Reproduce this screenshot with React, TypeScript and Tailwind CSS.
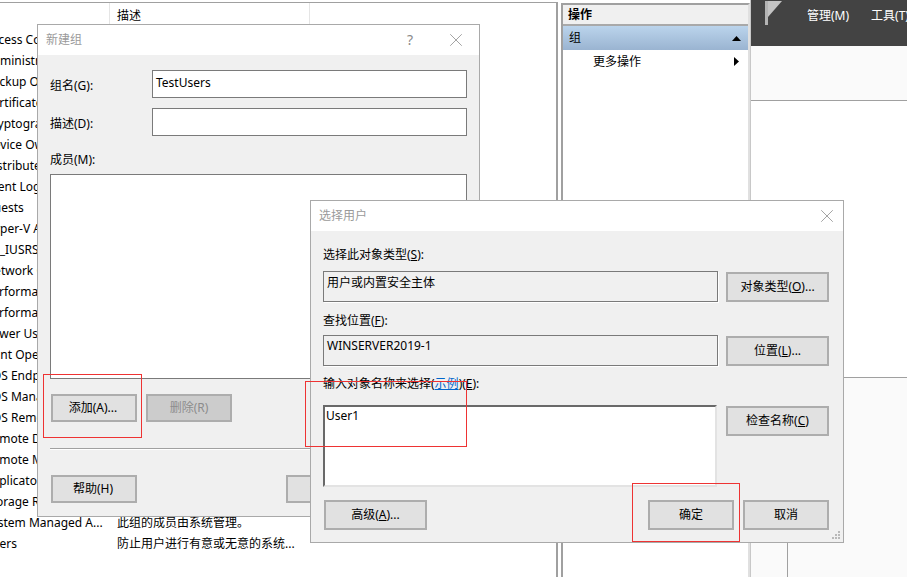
import React from 'react';
import { X } from 'lucide-react';

const FONT = '[font-family:"Noto_Sans","Noto_Sans_CJK_SC",sans-serif]';

const groups: [string, string][] = [
  ['Access Control Assistance', ''],
  ['Administrators', ''],
  ['Backup Operators', ''],
  ['Certificate Service', ''],
  ['Cryptographic Operators', ''],
  ['Device Owners', ''],
  ['Distributed COM Users', ''],
  ['Event Log Readers', ''],
  ['Guests', ''],
  ['Hyper-V Administrators', ''],
  ['IIS_IUSRS', ''],
  ['Network Configuration', ''],
  ['Performance Log Users', ''],
  ['Performance Monitor', ''],
  ['Power Users', ''],
  ['Print Operators', ''],
  ['RDS Endpoint Servers', ''],
  ['RDS Management Servers', ''],
  ['RDS Remote Access', ''],
  ['Remote Desktop Users', ''],
  ['Remote Management', ''],
  ['Replicator', ''],
  ['Storage Replica', ''],
  ['System Managed A...', '此组的成员由系统管理。'],
  ['Users', '防止用户进行有意或无意的系统...'],
];

const Btn: React.FC<{ className?: string; disabled?: boolean; children: React.ReactNode }> = ({ className = '', disabled, children }) => (
  <div
    className={`flex shrink-0 items-center justify-center border-2 border-[#adadad] ${disabled ? 'bg-[#cccccc] text-[#8c8c8c]' : 'bg-[#e1e1e1] text-black'} ${className}`}
  >
    {children}
  </div>
);

const GroupList = () => (
  <div className="flex h-full w-[558px] shrink-0 flex-col pt-[2px]">
    <div className="flex h-full flex-col border-t border-r-2 border-[#a0a0a0]">
      <div className="flex h-[26px] shrink-0">
        <div className="w-[110px] border-r border-[#e5e5e5]" />
        <div className="flex w-[200px] items-center border-r border-[#e5e5e5] pl-[7px]">描述</div>
      </div>
      {groups.map(([name, desc]) => (
        <div key={name} className="flex h-[21px] shrink-0 items-center">
          <div className="ml-[-15px] w-[125px] shrink-0 overflow-hidden whitespace-nowrap">{name}</div>
          <div className="pl-[7px] whitespace-nowrap">{desc}</div>
        </div>
      ))}
    </div>
  </div>
);

const ActionsPanel = () => (
  <div className="ml-[3px] flex h-full w-[189px] shrink-0 flex-col pt-[3px]">
    <div className="flex h-full flex-col border-x-2 border-t-2 border-x-[#a0a0a0] border-t-[#a0a0a0] border-r-[#e0e0e0]">
      <div className="flex h-[21px] shrink-0 items-center border-b-2 border-[#a9a9a9] bg-[#f0f0f0] pl-[5px] font-bold">操作</div>
      <div className="flex h-[24px] shrink-0 items-center justify-between bg-gradient-to-b from-[#bbd4ec] to-[#9ab4d1] pl-[6px] pr-[7px]">
        <span>组</span>
        <svg width="9" height="5" viewBox="0 0 9 5"><path d="M4.5 0 9 5H0z" fill="#000" /></svg>
      </div>
      <div className="flex h-[23px] shrink-0 items-center justify-between pl-[30px] pr-[9px]">
        <span>更多操作</span>
        <svg width="5" height="9" viewBox="0 0 5 9"><path d="M0 0 5 4.5 0 9z" fill="#000" /></svg>
      </div>
    </div>
  </div>
);

const ServerManager = () => (
  <div className="flex h-full flex-1 flex-col overflow-hidden border-l border-[#c8c8c8]">
    <div className="flex h-[46px] shrink-0 items-start bg-[#434343] pt-[1px] text-white">
      <svg width="18" height="25" viewBox="0 0 18 25" className="ml-[14px] shrink-0">
        <rect x="0" y="0" width="3" height="24" fill="#b4b4b4" />
        <path d="M3 0H17L3 16z" fill="#c4c4c4" />
      </svg>
      <span className="ml-[24px] mt-[7px] whitespace-nowrap">管理(M)</span>
      <span className="ml-[22px] mt-[7px] whitespace-nowrap">工具(T)</span>
    </div>
    <div className="h-[55px] shrink-0 border-b border-[#a0a0a0] bg-[#fafafa]" />
    <div className="h-[277px] shrink-0 border-b border-[#a0a0a0] bg-white" />
    <div className="flex flex-1 bg-[#fafafa]">
      <div className="w-[37px] border-r border-[#a0a0a0]" />
    </div>
  </div>
);

const NewGroupDialog = () => (
  <div className="absolute left-[37px] top-[24px] flex h-[493px] w-[443px] flex-col border border-[#a9a9a9] bg-[#f0f0f0]">
    <div className="flex h-[30px] shrink-0 items-center justify-between bg-white pl-[8px] pr-[12px] text-[#9a9a9a]">
      <span>新建组</span>
      <div className="flex items-center gap-[32px]">
        <span className="text-[14px] text-[#8a8a8a]">?</span>
        <X size={22} strokeWidth={0.7} className="text-[#707070]" />
      </div>
    </div>
    <div className="flex flex-1 flex-col px-[12px] pt-[15px]">
      <div className="flex items-center">
        <span className="mt-[4px] w-[102px] shrink-0">组名(G):</span>
        <div className="h-[28px] w-[315px] border border-[#7a7a7a] bg-white pl-[3px] pt-[4px]">TestUsers</div>
      </div>
      <div className="mt-[10px] flex items-center">
        <span className="mt-[4px] w-[102px] shrink-0">描述(D):</span>
        <div className="h-[28px] w-[315px] border border-[#7a7a7a] bg-white" />
      </div>
      <div className="mt-[15px] h-[17px] shrink-0 leading-[17px]">成员(M):</div>
      <div className="mt-[6px] h-[205px] w-[417px] shrink-0 border border-[#7a7a7a] bg-white" />
      <div className="mt-[15px] flex gap-[9px] pl-[1px]">
        <Btn className="h-[28px] w-[86px] pr-[2px]">添加(A)...</Btn>
        <Btn disabled className="h-[28px] w-[86px]">删除(R)</Btn>
      </div>
      <div className="mt-[26px] h-[2px] w-[417px] shrink-0 border-t border-[#a0a0a0] bg-white" />
      <div className="mt-[25px] flex pl-[1px]">
        <Btn className="h-[28px] w-[86px] pr-[2px]">帮助(H)</Btn>
        <Btn className="ml-[149px] h-[28px] w-[86px]">创建(E)</Btn>
      </div>
    </div>
  </div>
);

const inputCls = 'h-[31px] w-[395px] shrink-0 border border-[#7a7a7a] pl-[3px] shadow-[1px_1px_0_#ffffff]';

const SelectUserDialog = () => (
  <div className="absolute left-[310px] top-[200px] flex h-[343px] w-[534px] flex-col border border-[#a9a9a9] bg-[#f0f0f0]">
    <div className="flex h-[30px] shrink-0 items-center justify-between bg-white pl-[8px] pr-[5px] text-[#9a9a9a]">
      <span>选择用户</span>
      <X size={22} strokeWidth={0.7} className="text-[#707070]" />
    </div>
    <div className="relative flex flex-1 flex-col pl-[12px] pt-[16px]">
      <div className="h-[16px] leading-[16px]">选择此对象类型(<span className="underline">S</span>):</div>
      <div className="mt-[8px] flex gap-[8px]">
        <div className={`${inputCls} pt-[3px]`}>用户或内置安全主体</div>
        <Btn className="mt-[1px] h-[30px] w-[103px]">对象类型(<span className="underline">O</span>)...</Btn>
      </div>
      <div className="mt-[11px] h-[16px] leading-[16px]">查找位置(<span className="underline">F</span>):</div>
      <div className="mt-[6px] flex gap-[8px]">
        <div className={`${inputCls} pt-[2px]`}>WINSERVER2019-1</div>
        <Btn className="mt-[1px] h-[30px] w-[103px]">位置(<span className="underline">L</span>)...</Btn>
      </div>
      <div className="mt-[10px] h-[16px] leading-[16px]">
        输入对象名称来选择(<span className="text-[#0066cc] underline">示例</span>)(<span className="underline">E</span>):
      </div>
      <div className="mt-[13px] flex gap-[9px]">
        <div className="h-[82px] w-[394px] shrink-0 border-y-2 border-l-2 border-r-2 border-t-[#696969] border-l-[#696969] border-r-[#e3e3e3] border-b-[#e3e3e3] bg-white pl-[1px] pt-[1px]">
          User1
        </div>
        <Btn className="mt-[1px] h-[30px] w-[103px]">检查名称(<span className="underline">C</span>)</Btn>
      </div>
      <div className="mt-[13px] flex pl-[1px]">
        <Btn className="h-[30px] w-[103px]">高级(<span className="underline">A</span>)...</Btn>
        <Btn className="ml-[221px] h-[30px] w-[86px]">确定</Btn>
        <Btn className="ml-[9px] h-[30px] w-[86px]">取消</Btn>
      </div>
      <svg width="11" height="11" viewBox="0 0 11 11" className="absolute bottom-[1px] right-[1px]" fill="#b8b8b8">
        <rect x="7" y="1" width="2" height="2" />
        <rect x="4" y="4" width="2" height="2" />
        <rect x="7" y="4" width="2" height="2" />
        <rect x="1" y="7" width="2" height="2" />
        <rect x="4" y="7" width="2" height="2" />
        <rect x="7" y="7" width="2" height="2" />
      </svg>
    </div>
  </div>
);

export default function App() {
  return (
    <div className={`relative flex h-[577px] w-[907px] overflow-hidden bg-white text-[12px] leading-[16px] text-black ${FONT}`}>
      <GroupList />
      <ActionsPanel />
      <ServerManager />
      <NewGroupDialog />
      <SelectUserDialog />
      {/* red annotation boxes */}
      <div className="absolute left-[43px] top-[374px] h-[64px] w-[99px] border border-[#ee3333]" />
      <div className="absolute left-[305px] top-[381px] h-[66px] w-[162px] border border-[#ee3333]" />
      <div className="absolute left-[632px] top-[483px] h-[59px] w-[108px] border border-[#ee3333]" />
    </div>
  );
}
